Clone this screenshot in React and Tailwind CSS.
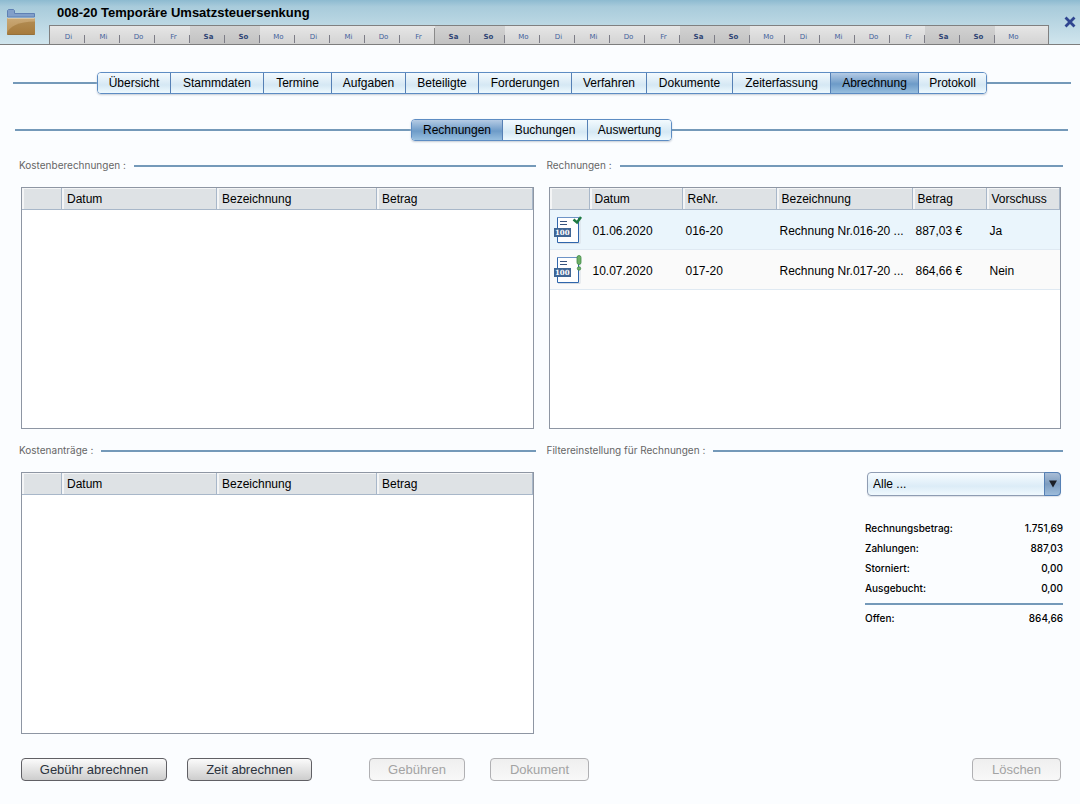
import { useState } from "react";
import clsx from "clsx";

const weekdays = ["Di", "Mi", "Do", "Fr", "Sa", "So", "Mo"];
const days = Array.from({ length: 28 }, (_, i) => weekdays[i % 7]);

const mainTabs = [
  { name: "Übersicht", width: "w-[73px]" },
  { name: "Stammdaten", width: "w-[93px]" },
  { name: "Termine", width: "w-[68px]" },
  { name: "Aufgaben", width: "w-[74px]" },
  { name: "Beteiligte", width: "w-[73px]" },
  { name: "Forderungen", width: "w-[93px]" },
  { name: "Verfahren", width: "w-[75px]" },
  { name: "Dokumente", width: "w-[86px]" },
  { name: "Zeiterfassung", width: "w-[98px]" },
  { name: "Abrechnung", width: "w-[88px]" },
  { name: "Protokoll", width: "w-[67px]" },
];

const subTabs = [
  { name: "Rechnungen", width: "w-[91px]" },
  { name: "Buchungen", width: "w-[85px]" },
  { name: "Auswertung", width: "w-[83px]" },
];

const costColumns = [
  { name: "", width: "w-[40px]" },
  { name: "Datum", width: "w-[155px]" },
  { name: "Bezeichnung", width: "w-[160px]" },
  { name: "Betrag", width: "" },
];

const invoiceColumns = [
  { name: "", width: "w-[40px]" },
  { name: "Datum", width: "w-[93px]" },
  { name: "ReNr.", width: "w-[94px]" },
  { name: "Bezeichnung", width: "w-[136px]" },
  { name: "Betrag", width: "w-[74px]" },
  { name: "Vorschuss", width: "" },
];

const invoices = [
  {
    paid: true,
    cells: ["01.06.2020", "016-20", "Rechnung Nr.016-20 ...", "887,03 €", "Ja"],
  },
  {
    paid: false,
    cells: ["10.07.2020", "017-20", "Rechnung Nr.017-20 ...", "864,66 €", "Nein"],
  },
];

const totals = [
  ["Rechnungsbetrag:", "1.751,69"],
  ["Zahlungen:", "887,03"],
  ["Storniert:", "0,00"],
  ["Ausgebucht:", "0,00"],
];

function FolderIcon() {
  return (
    <svg width="30" height="28" viewBox="0 0 30 28" aria-hidden="true">
      <defs>
        <linearGradient id="folder-front" x1="0" y1="0" x2="0" y2="1">
          <stop offset="0" stopColor="#c9a876" />
          <stop offset="1" stopColor="#b98f52" />
        </linearGradient>
        <linearGradient id="folder-shade" x1="0" y1="0" x2="0" y2="1">
          <stop offset="0" stopColor="#b08a50" />
          <stop offset="1" stopColor="#a67a3c" />
        </linearGradient>
      </defs>
      <path d="M1.500 8V1.500l1-1h5l1 1v3h20V8z" fill="#819fca" stroke="#5f80b4" />
      <path d="M1 9h28v16l-1 1H2l-1-1z" fill="url(#folder-front)" />
      <path d="M1 24C3 18 12 12.500 29 12.500V25l-1 1H2l-1-1z" fill="url(#folder-shade)" />
      <path d="M1.500 9.500h27" stroke="#dcc7a4" />
      <path d="M1.500 25.500h27" stroke="#94703c" />
    </svg>
  );
}

function InvoiceIcon({ paid }) {
  return (
    <svg
      width="30"
      height="30"
      viewBox="0 0 30 30"
      role="img"
      aria-label={paid ? "bezahlt" : "offen"}
    >
      <path d="M4 28.500h22V5" fill="none" stroke="#d5dbe2" />
      <path d="M3.500 2.500h21v25h-21z" fill="#fff" stroke="#2f66ac" />
      <path d="M3.500 2.500h21" stroke="#6d93c6" />
      <path d="M6 6.500h7M6 9.500h7" stroke="#35537f" />
      <rect y="13" width="17" height="9" fill="#3f6695" />
      <text
        x="1"
        y="20"
        fill="#fff"
        className="font-['DejaVu_Serif'] text-[7px] font-bold"
      >
        100
      </text>
      {paid ? (
        <path d="M19.500 4.500l3.500 3 4-5.500" fill="none" stroke="#1d7a43" strokeWidth="2.500" />
      ) : (
        <g fill="#6fb066" stroke="#3f8a46" strokeWidth="0.800">
          <rect x="23" y="0.500" width="4" height="9" rx="2" />
          <circle cx="25" cy="13.500" r="1.700" />
        </g>
      )}
    </svg>
  );
}

function TabBar({ tabs, active, onSelect, className }) {
  return (
    <nav className={clsx("flex items-center", className)}>
      <div className="h-[2px] flex-1 bg-[#7499b9]" />
      <div className="flex h-[22px] overflow-hidden rounded-[4px] border border-[#5d8cc3] shadow-[0_1px_2px_#c5ccd6]">
        {tabs.map((tab) => (
          <button
            key={tab.name}
            type="button"
            onClick={() => onSelect(tab.name)}
            className={clsx(
              "border-r border-[#5580b5] text-center last:border-r-0",
              tab.width,
              tab.name === active
                ? "bg-linear-to-b from-[#b5cbe4] from-0% via-[#6d9bc8] via-55% to-[#98bfdf]"
                : "bg-linear-to-b from-[#f3fafe] from-0% via-[#d5e8f4] via-60% to-[#eef9fe]"
            )}
          >
            {tab.name}
          </button>
        ))}
      </div>
      <div className="h-[2px] flex-1 bg-[#7499b9]" />
    </nav>
  );
}

function SectionTitle({ children }) {
  return (
    <div className="flex h-4 items-center gap-2">
      <h2 className="font-['Inter',sans-serif] text-[10px] text-[#666]">{children}</h2>
      <div className="h-[2px] flex-1 bg-[#7499b9]" />
    </div>
  );
}

function DataTable({ columns, rows = [], height }) {
  return (
    <div className={clsx("mx-[2px] mt-[13px] border border-[#8e96a3] bg-white", height)}>
      <table className="w-full table-fixed border-separate border-spacing-0">
        <thead>
          <tr className="h-[22px] bg-[#dee2e5]">
            {columns.map((col) => (
              <th
                key={col.name}
                className={clsx(
                  "border-r border-b border-[#a8b7c9] p-0 pl-[5px] text-left font-normal shadow-[inset_2px_1px_0_#f4f5f6]",
                  col.width
                )}
              >
                {col.name}
              </th>
            ))}
          </tr>
        </thead>
        <tbody>
          {rows.map((row) => (
            <tr key={row.cells[1]} className="h-10 odd:bg-[#eaf5fc] even:bg-[#fafafa]">
              <td className="border-b border-[#dfe9f2] p-0 pl-1">
                <InvoiceIcon paid={row.paid} />
              </td>
              {row.cells.map((cell) => (
                <td
                  key={cell}
                  className="border-b border-[#dfe9f2] p-0 pt-[2px] pl-[3px] whitespace-nowrap"
                >
                  {cell}
                </td>
              ))}
            </tr>
          ))}
        </tbody>
      </table>
    </div>
  );
}

function ActionButton({ children, disabled, width }) {
  return (
    <button
      type="button"
      disabled={disabled}
      className={clsx(
        "h-[23px] rounded-[4px] border bg-linear-to-b text-[13px]",
        width,
        disabled
          ? "border-[#b0b0b3] from-[#efefef] to-[#f8f8f8] text-[#a3a3a3]"
          : "border-[#606065] from-[#fbfbfb] to-[#cdcdcd] text-[#2c333d]"
      )}
    >
      {children}
    </button>
  );
}

function TotalRow({ label, value }) {
  return (
    <div className="flex h-5 items-center justify-between">
      <dt>{label}</dt>
      <dd>{value}</dd>
    </div>
  );
}

function Header() {
  return (
    <header className="flex h-[45px] border-b border-[#7d7d7d] bg-linear-to-b from-[#8dbad0] from-0% via-[#a8cbdb] via-15% to-[#d0e5ed]">
      <div className="w-[49px] pt-[9px] pl-[6px]">
        <FolderIcon />
      </div>
      <div className="flex min-w-0 flex-1 flex-col">
        <h1 className="h-[25px] pl-2 text-[13px] leading-[25px] font-bold">
          008-20 Temporäre Umsatzsteuersenkung
        </h1>
        <div className="flex flex-1 overflow-hidden border border-b-0 border-[#808080] bg-linear-to-b from-[#e6e6e6] to-[#d3d3d3]">
          {days.map((day, i) => {
            const weekend = day === "Sa" || day === "So";
            return (
              <div
                key={i}
                className={clsx(
                  "flex w-[35px] shrink-0 items-end last:w-auto last:flex-1",
                  weekend && "bg-linear-to-b from-[#d2d2d2] to-[#c2c2c2]"
                )}
              >
                <span
                  className={clsx(
                    "w-[34px] pb-[2px] pl-[3px] text-center font-['DejaVu_Sans',sans-serif] text-[7px] leading-[10px]",
                    weekend ? "font-bold text-[#2f4575]" : "text-[#44629c]"
                  )}
                >
                  {day}
                </span>
                {i < days.length - 1 && (
                  <i
                    className={clsx(
                      "w-px",
                      i === 10
                        ? "h-4 bg-[#8a8a8a] shadow-[1px_0_0_#f0f0f0]"
                        : "mb-px h-2 bg-[#7c7c86]"
                    )}
                  />
                )}
              </div>
            );
          })}
        </div>
      </div>
      <button type="button" aria-label="Schließen" className="w-[31px] pl-[15px]">
        <svg width="12" height="12" viewBox="0 0 12 12">
          <path d="M2.500 2.500l7 7M9.500 2.500l-7 7" stroke="#2f4590" strokeWidth="2.800" strokeLinecap="square" />
        </svg>
      </button>
    </header>
  );
}

export default function App() {
  const [tab, setTab] = useState("Abrechnung");
  const [subTab, setSubTab] = useState("Rechnungen");
  const [filter, setFilter] = useState("Alle ...");

  return (
    <div className="min-h-screen bg-[#fbfdff] font-['Liberation_Sans',Arial,sans-serif] text-xs text-black">
      <Header />
      <TabBar
        tabs={mainTabs}
        active={tab}
        onSelect={setTab}
        className="mt-[27px] mr-[9px] ml-[13px]"
      />
      <TabBar
        tabs={subTabs}
        active={subTab}
        onSelect={setSubTab}
        className="mt-[25px] mr-3 ml-[15px]"
      />

      <main className="mt-[17px] pr-[17px] pl-[19px]">
        <div className="grid grid-cols-2 gap-x-[11px] gap-y-[14px]">
          <section>
            <SectionTitle>Kostenberechnungen :</SectionTitle>
            <DataTable columns={costColumns} height="h-[242px]" />
          </section>
          <section>
            <SectionTitle>Rechnungen :</SectionTitle>
            <DataTable columns={invoiceColumns} rows={invoices} height="h-[242px]" />
          </section>
          <section>
            <SectionTitle>Kostenanträge :</SectionTitle>
            <DataTable columns={costColumns} height="h-[262px]" />
          </section>
          <section>
            <SectionTitle>Filtereinstellung für Rechnungen :</SectionTitle>
            <div className="mt-[13px] ml-auto w-[198px]">
              <div className="relative mx-[2px]">
                <select
                  aria-label="Filter"
                  value={filter}
                  onChange={(e) => setFilter(e.target.value)}
                  className="block h-6 w-full appearance-none rounded-[4px] border border-[#8f9db3] bg-linear-to-b from-[#f7fcff] from-0% via-[#dcecf7] via-60% to-[#f0f9fe] pl-[5px] shadow-[0_1px_1px_#dde2e8]"
                >
                  <option>Alle ...</option>
                  <option>Offen</option>
                  <option>Bezahlt</option>
                </select>
                <span className="pointer-events-none absolute top-0 right-0 flex h-6 w-[17px] items-center justify-center rounded-r-[4px] border border-[#5580b5] bg-linear-to-b from-[#a9bdd6] via-[#7c9cbf] to-[#9dbcdb]">
                  <svg width="8" height="8" viewBox="0 0 8 8">
                    <path d="M0 0.500h8L4 7.500z" fill="#1b1f26" />
                  </svg>
                </span>
              </div>
              <dl className="mt-[23px] font-['Inter',sans-serif] text-[10px] font-medium">
                {totals.map(([label, value]) => (
                  <TotalRow key={label} label={label} value={value} />
                ))}
                <div className="my-1 h-[2px] bg-[#7499b9]" />
                <TotalRow label="Offen:" value="864,66" />
              </dl>
            </div>
          </section>
        </div>

        <footer className="mx-[2px] mt-6 flex">
          <div className="flex flex-1 gap-5">
            <ActionButton width="w-[146px]">Gebühr abrechnen</ActionButton>
            <ActionButton width="w-[125px]">Zeit abrechnen</ActionButton>
            <div className="ml-[37px] flex gap-[25px]">
              <ActionButton disabled width="w-[96px]">
                Gebühren
              </ActionButton>
              <ActionButton disabled width="w-[99px]">
                Dokument
              </ActionButton>
            </div>
          </div>
          <ActionButton disabled width="w-[89px]">
            Löschen
          </ActionButton>
        </footer>
      </main>
    </div>
  );
}
